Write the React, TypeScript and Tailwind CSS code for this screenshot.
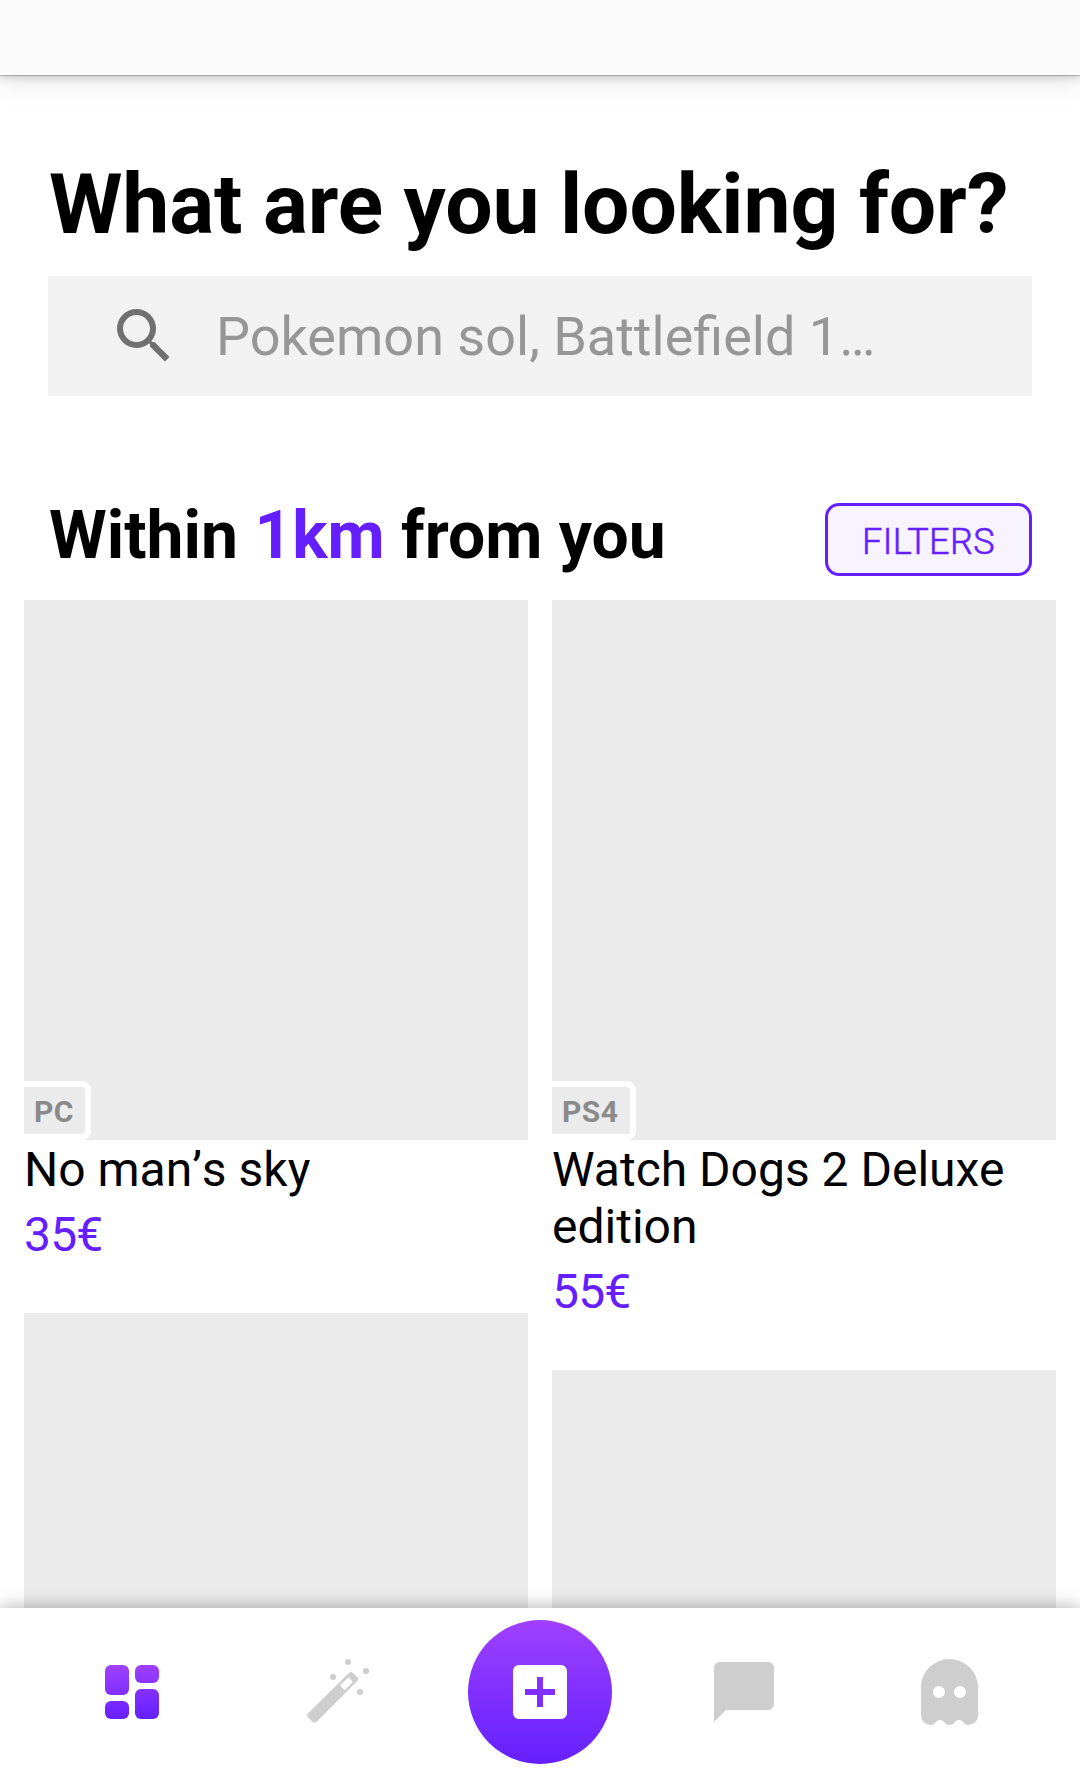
import React from "react";

type Game = { platform?: string; title?: React.ReactNode; price?: string };

function GameCard({ platform, title, price }: Game) {
  return (
    <article>
      <div className="relative h-[540px] overflow-hidden bg-[#ebebeb]">
        {platform && (
          <span className="absolute bottom-0 left-0 flex h-[59px] items-center rounded-r-[9px] border-y-[6px] border-r-[6px] border-white bg-[#ebebeb] pt-[2px] pl-[10px] pr-[11px] text-[30px] leading-none font-bold tracking-[0.5px] text-[#8a8a8a]">
            {platform}
          </span>
        )}
      </div>
      {title && (
        <>
          <h3 className="pt-px text-[48px] leading-[57px] text-black">{title}</h3>
          <p className="mt-2 mb-[50px] text-[48px] leading-[57px] tracking-[-0.8px] text-[#651fff]">{price}</p>
        </>
      )}
    </article>
  );
}

export default function App() {
  return (
    <div className="flex h-[1776px] w-[1080px] flex-col overflow-hidden bg-white font-['Roboto',sans-serif]">
      <header className="relative z-10 h-[75px] shrink-0 bg-[#fafafa] shadow-[0_1px_1px_rgba(0,0,0,0.2),0_3px_8px_rgba(0,0,0,0.16),0_12px_24px_rgba(0,0,0,0.07)]" />

      <main className="min-h-0 flex-1 overflow-hidden">
        <section className="px-12 pt-[80px]">
          <h1 className="pl-px text-[84px] leading-[100px] font-bold tracking-[-0.15px] whitespace-nowrap text-black">
            What are you looking for?
          </h1>
          <div className="mt-[21px] flex h-[120px] items-center bg-[#f2f2f2] pl-[60px]">
            <svg className="size-[72px]" viewBox="0 0 24 24" fill="#707070">
              <path d="M15.5 14h-.79l-.28-.27A6.471 6.471 0 0 0 16 9.5 6.5 6.5 0 1 0 9.5 16c1.61 0 3.09-.59 4.23-1.57l.27.28v.79l5 4.99L20.49 19l-4.99-5zm-6 0C7.01 14 5 11.99 5 9.5S7.01 5 9.5 5 14 7.01 14 9.5 11.99 14 9.5 14z" />
            </svg>
            <span className="ml-9 text-[54px] text-[#969696]">Pokemon sol, Battlefield 1…</span>
          </div>
        </section>

        <section className="flex items-start justify-between px-12 pt-[107px]">
          <h2 className="-mt-[6px] mb-[-1px] pl-px text-[66px] leading-[78px] font-bold text-black">
            Within <span className="text-[#651fff]">1km</span> from you
          </h2>
          <button className="flex h-[73px] w-[207px] items-center justify-center rounded-[14px] border-[3px] border-[#651fff] bg-[#f7f3ff] pt-[5px] text-[36px] font-light tracking-[0.4px] text-[#651fff] [-webkit-text-stroke:0.6px_#651fff]">
            FILTERS
          </button>
        </section>

        <section className="mt-[24px] grid grid-cols-2 gap-6 px-6">
          <div>
            <GameCard
              platform="PC"
              title={<>No man<span className="[font-kerning:none]">’s</span> sky</>}
              price="35€"
            />
            <GameCard />
          </div>
          <div>
            <GameCard platform="PS4" title="Watch Dogs 2 Deluxe edition" price="55€" />
            <GameCard />
          </div>
        </section>
      </main>

      <nav className="relative z-10 grid h-[168px] shrink-0 grid-cols-5 place-items-center bg-white px-[30px] shadow-[0_0_18px_rgba(0,0,0,0.33)]">
        <svg className="size-[72px]" viewBox="0 0 24 24">
          <defs>
            <linearGradient id="dash" gradientUnits="userSpaceOnUse" x1="11" y1="3" x2="12" y2="21">
              <stop offset="0" stopColor="#a040ff" />
              <stop offset="1" stopColor="#651fff" />
            </linearGradient>
          </defs>
          <g fill="url(#dash)">
            <rect x="3" y="3" width="8" height="10" rx="2" />
            <rect x="3" y="15" width="8" height="6" rx="2" />
            <rect x="13" y="3" width="8" height="6" rx="2" />
            <rect x="13" y="11" width="8" height="10" rx="2" />
          </g>
        </svg>
        <svg className="size-[72px]" viewBox="-2 0 72 72" fill="#cecece">
          <circle cx="46" cy="6" r="3" />
          <circle cx="64" cy="15" r="3" />
          <circle cx="31" cy="21" r="3" />
          <circle cx="58" cy="36" r="3" />
          <path
            fillRule="evenodd"
            d="M46.9 17.1a3 3 0 0 1 4.2 0l4 4a3 3 0 0 1 0 4.2L14.6 65.8a3 3 0 0 1-4.2 0l-4.3-4.3a3 3 0 0 1 0-4.2ZM46.5 21.3 38 29.6l4.7 4.6 8-8.3Z"
          />
        </svg>
        <button className="flex size-[144px] items-center justify-center rounded-full bg-linear-to-b from-[#a040ff] via-[#812fff] to-[#651fff]">
          <svg className="size-[72px]" viewBox="0 0 24 24" fill="white">
            <path d="M19 3H5c-1.1 0-2 .9-2 2v14c0 1.1.9 2 2 2h14c1.1 0 2-.9 2-2V5c0-1.1-.9-2-2-2zm-2 10h-4v4h-2v-4H7v-2h4V7h2v4h4v2z" />
          </svg>
        </button>
        <svg className="size-[72px]" viewBox="0 0 24 24" fill="#cecece">
          <path d="M20 2H4c-1.1 0-2 .9-2 2v18l4-4h14c1.1 0 2-.9 2-2V4c0-1.1-.9-2-2-2z" />
        </svg>
        <svg className="size-[72px]" viewBox="-1.5 0 72 72" fill="#cecece">
          <path
            fillRule="evenodd"
            d="M36 3a28.5 28.5 0 0 1 28.5 28.5V59.5a9.5 9.5 0 0 1-9.5 9.5c-5 0-5-5-9.5-5S41 69 36 69s-5-5-9.5-5-4.5 5-9.5 5a9.5 9.5 0 0 1-9.5-9.500V31.5A28.5 28.5 0 0 1 36 3ZM25.5 30a6 6 0 1 0 0 12 6 6 0 0 0 0-12Zm21 0a6 6 0 1 0 0 12 6 6 0 0 0 0-12Z"
          />
        </svg>
      </nav>
    </div>
  );
}
